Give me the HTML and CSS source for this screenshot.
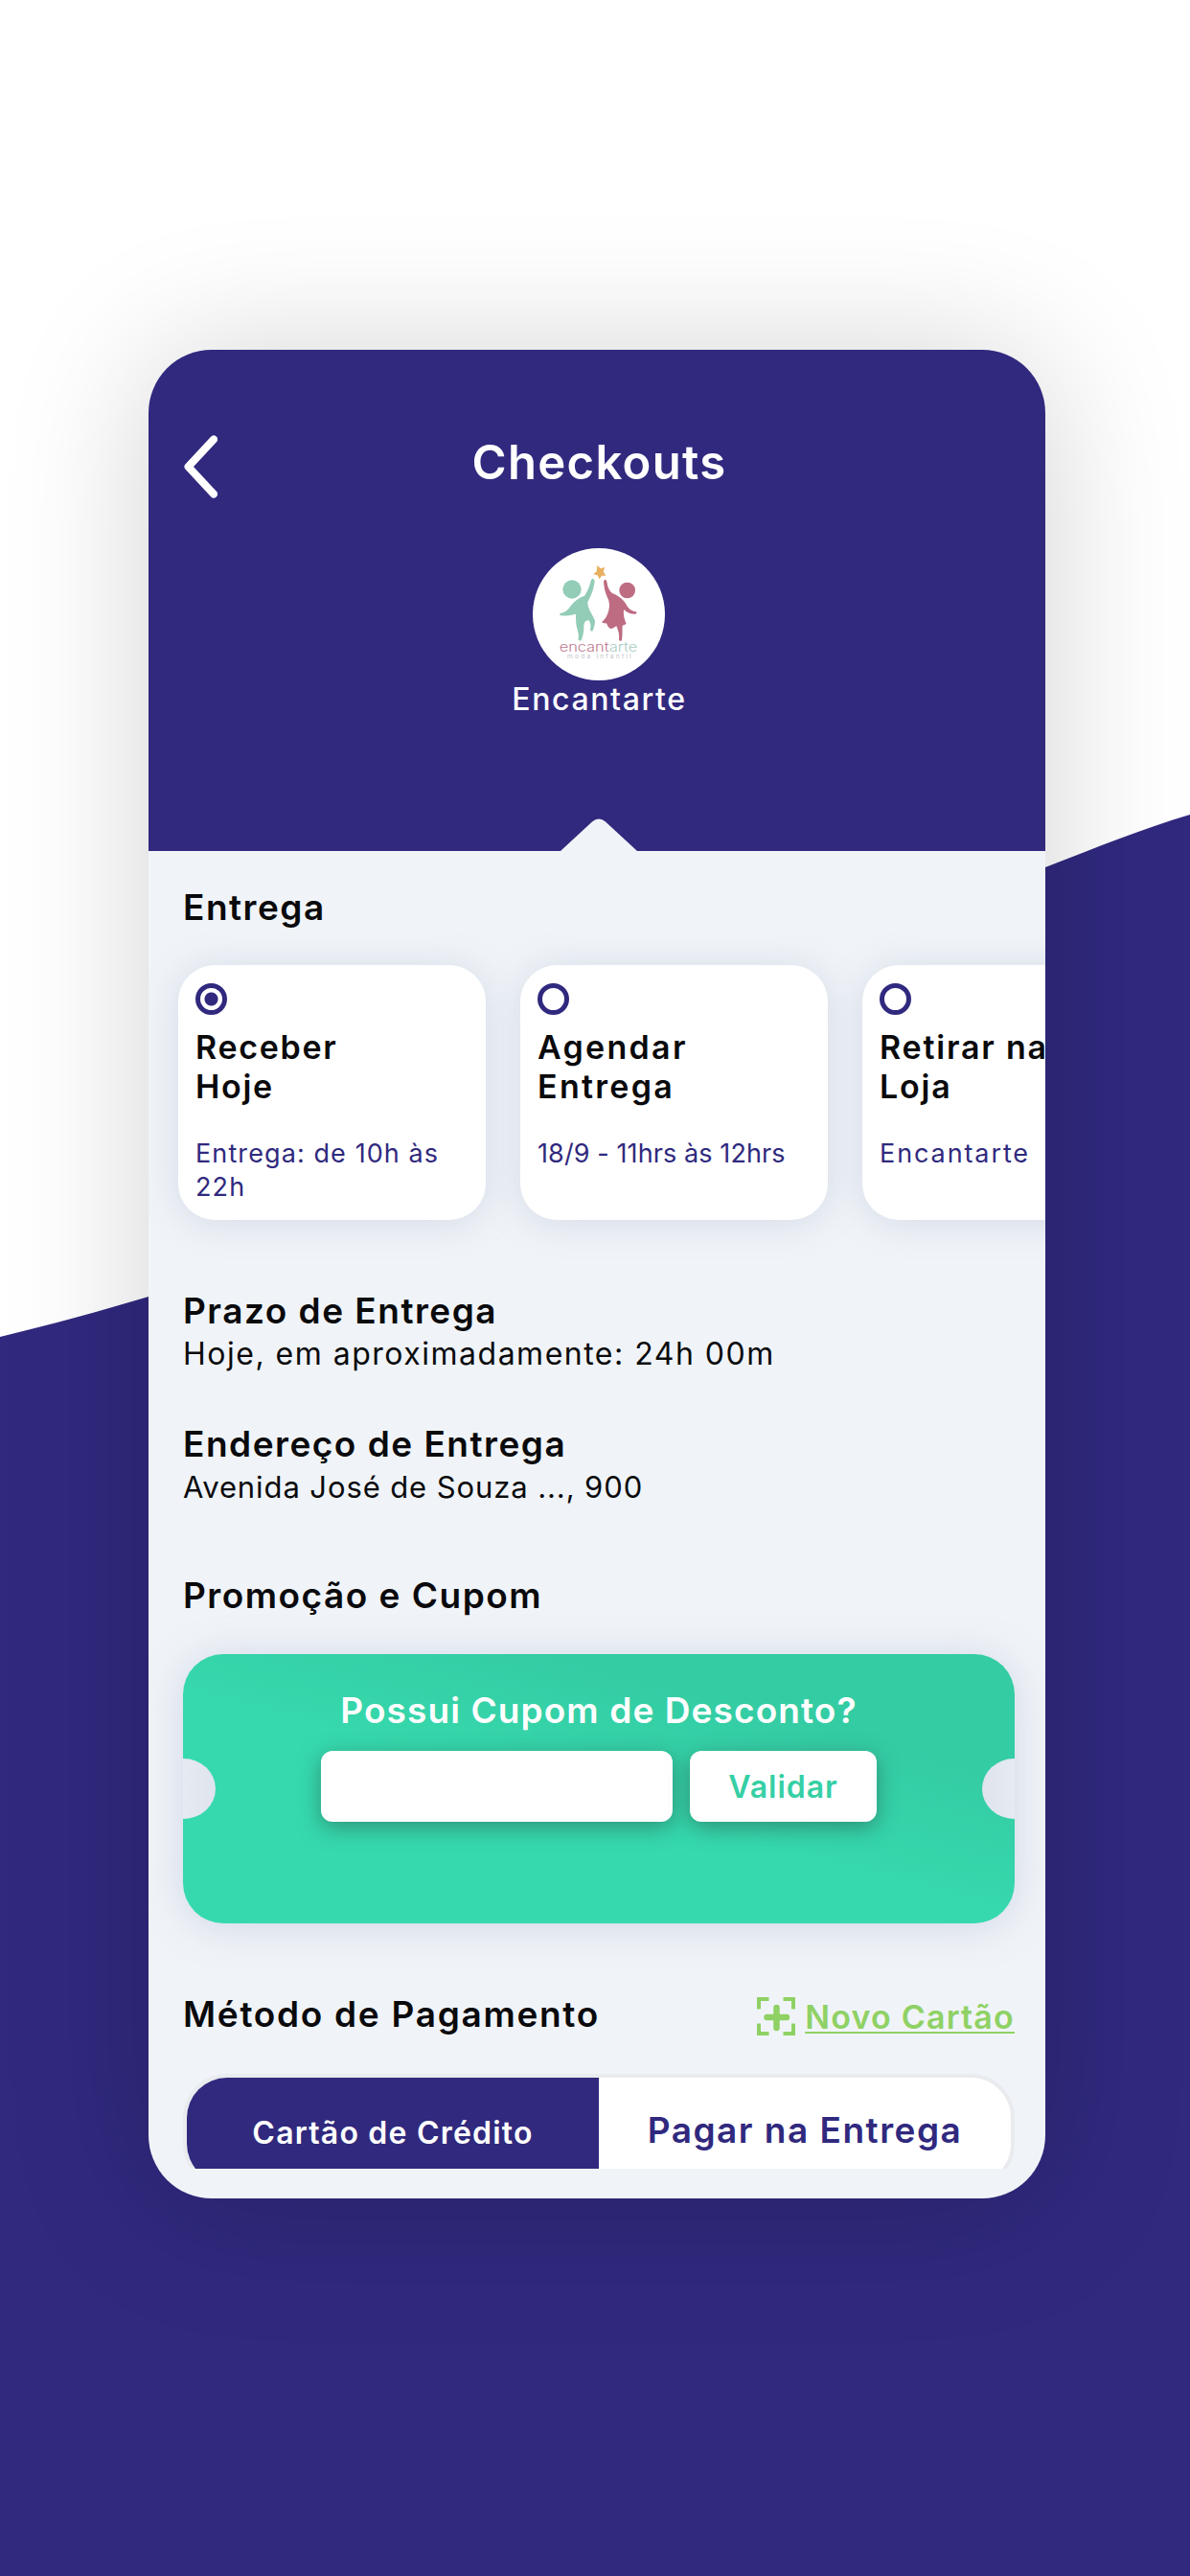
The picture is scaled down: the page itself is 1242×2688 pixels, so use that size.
FILE: index.html
```html
<!DOCTYPE html>
<html lang="pt-BR">
<head>
    <meta charset="UTF-8">
    <meta name="viewport" content="width=device-width, initial-scale=1.0">
    <title>Checkouts</title>
    <link rel="stylesheet" href="styles.css">
</head>
<body>
    <svg class="wave" viewBox="0 0 1242 2688" preserveAspectRatio="none">
        <path d="M0 1395C54 1382 105 1368 155 1353C520 1242 760 1040 1091 905C1145 884 1192 865 1242 850V2688H0Z" fill="#30297e"/>
    </svg>

    <main class="phone">
        <header class="header">
            <div class="topbar">
                <svg class="back" viewBox="0 0 36 66">
                    <path d="M32 4.500L5.500 33L32 61.500" fill="none" stroke="#fff" stroke-width="8" stroke-linecap="round" stroke-linejoin="round"/>
                </svg>
                <h1>Checkouts</h1>
            </div>

            <svg class="logo" viewBox="48 36 414 414">
                <circle cx="255" cy="243" r="207" fill="#fff"/>
                <path d="M250 90L260 99L274 96L269 109L277 122L264 122L257 133L251 121L238 118L248 109Z" fill="#e9b05f"/>
                <g fill="#93cdb7">
                    <circle cx="171" cy="165" r="29"/>
                    <path d="M231 136Q237 126 242 138C240 165 228 190 220 205C220 230 238 245 243 265C243 275 240 285 236 295Q231 298 228 292C230 280 230 270 224 262C212 262 208 270 208 285C208 300 204 315 200 324Q195 328 190 322C193 312 192 305 188 292C183 275 183 262 183 242C170 246 155 248 134 247Q130 243 134 240C150 237 160 228 168 215C180 200 195 190 210 185C220 172 226 155 231 136Z"/>
                </g>
                <g fill="#bd6c82">
                    <circle cx="344" cy="168" r="25"/>
                    <path d="M270 140Q275 128 280 140C282 158 288 170 298 178C315 184 330 195 338 208C345 222 355 234 372 235Q376 239 371 242C355 243 343 238 333 228C331 245 335 260 341 272C336 276 332 277 329 278C328 292 330 300 327 325Q322 329 318 323C320 308 317 295 310 280C303 283 300 290 290 287C283 284 282 276 279 271Q270 272 264 268C275 258 283 245 286 230C290 215 288 200 281 188C274 172 271 158 270 140Z"/>
                </g>
                <text x="131" y="360" class="logo-name" textLength="156" lengthAdjust="spacingAndGlyphs" fill="#bd7a93">encant</text>
                <text x="287" y="360" class="logo-name" textLength="89" lengthAdjust="spacingAndGlyphs" fill="#a9cdc3">arte</text>
                <text x="156" y="380" class="logo-sub" textLength="200" fill="#c3c3cb">moda infantil</text>
            </svg>
            <div class="store">Encantarte</div>
            <svg class="pointer" viewBox="0 0 80 34">
                <path d="M0 34L33 3.500Q40-2.500 47 3.500L80 34Z" fill="#f0f4f8"/>
            </svg>
        </header>

        <section class="content">
            <h2>Entrega</h2>
            <div class="options">
                <div class="option">
                    <span class="radio checked"></span>
                    <h3>Receber<br>Hoje</h3>
                    <p>Entrega: de 10h às<br>22h</p>
                </div>
                <div class="option schedule">
                    <span class="radio"></span>
                    <h3>Agendar<br>Entrega</h3>
                    <p>18/9 - 11hrs às 12hrs</p>
                </div>
                <div class="option pickup">
                    <span class="radio"></span>
                    <h3>Retirar na<br>Loja</h3>
                    <p>Encantarte</p>
                </div>
            </div>

            <div class="info">
                <h2>Prazo de Entrega</h2>
                <p>Hoje, em aproximadamente: 24h 00m</p>
            </div>
            <div class="info address">
                <h2>Endereço de Entrega</h2>
                <p>Avenida José de Souza ..., 900</p>
            </div>

            <h2 class="promo-title">Promoção e Cupom</h2>
            <div class="coupon">
                <h2>Possui Cupom de Desconto?</h2>
                <form class="coupon-form">
                    <input type="text">
                    <button type="button">Validar</button>
                </form>
            </div>

            <div class="payment-head">
                <h2>Método de Pagamento</h2>
                <a class="new-card">
                    <svg viewBox="0 0 40 40" fill="none" stroke="#8fd165">
                        <path d="M2 12.500V2H12.500M27.500 2H38V12.500M38 27.500V38H27.500M12.500 38H2V27.500" stroke-width="4"/>
                        <path d="M20.500 11V32M10.500 21H31" stroke-width="6.500" stroke-linecap="round"/>
                    </svg>
                    <span>Novo Cartão</span>
                </a>
            </div>
            <div class="tabs-clip">
                <div class="tabs">
                    <div class="tab active">Cartão de Crédito</div>
                    <div class="tab">Pagar na Entrega</div>
                </div>
            </div>
        </section>
    </main>
</body>
</html>
```
FILE: styles.css
```css
* {
    box-sizing: border-box;
}
body {
    margin: 0;
    height: 2688px;
    overflow: hidden;
    background: #fff;
    font-family: Inter, "Open Sans", sans-serif;
    color: #0a0a0c;
    display: flow-root;
}
h1, h2, h3, p {
    margin: 0;
    white-space: nowrap;
}
.wave {
    position: absolute;
    top: 0;
    left: 0;
    width: 1242px;
    height: 2688px;
    z-index: -1;
}
.phone {
    width: 936px;
    height: 1929px;
    margin: 365px 0 0 155px;
    border-radius: 66px;
    overflow: hidden;
    background: #f0f4f8;
    box-shadow: 0 6px 150px rgba(0, 0, 0, 0.18);
}

/* header */
.header {
    position: relative;
    height: 523px;
    padding: 88px 35px 0 38px;
    background: #30297e;
    color: #fff;
    display: flex;
    flex-direction: column;
    align-items: center;
}
.topbar {
    width: 100%;
    height: 66px;
    display: grid;
    grid-template-columns: 36px 1fr 36px;
    align-items: center;
}
.back {
    width: 36px;
    height: 66px;
    margin-left: -2px;
}
h1 {
    font-size: 49px;
    line-height: 60px;
    font-weight: 600;
    letter-spacing: 1.3px;
    text-align: center;
    padding: 0 0 8px 2px;
}
.logo {
    width: 138px;
    height: 138px;
    margin-top: 53px;
    flex: none;
}
.logo-name {
    font-size: 42px;
    font-weight: 300;
}
.logo-sub {
    font-size: 20px;
}
.store {
    font-size: 32px;
    line-height: 40px;
    font-weight: 500;
    letter-spacing: 1.6px;
    padding-left: 2px;
}
.pointer {
    position: absolute;
    left: 430px;
    bottom: 0;
    width: 80px;
    height: 34px;
}

/* content */
.content {
    padding: 36px 32px 0 36px;
}
h2 {
    font-size: 37px;
    line-height: 46px;
    font-weight: 600;
    letter-spacing: 1.5px;
}
.options {
    display: flex;
    gap: 36px;
    margin: 37px 0 0 -5px;
}
.option {
    flex: none;
    width: 321px;
    height: 266px;
    padding: 19px 18px;
    border-radius: 38px;
    background: #fff;
    box-shadow: 0 3px 36px rgba(150, 160, 195, 0.3);
}
.radio {
    display: block;
    width: 33px;
    height: 33px;
    border: 5px solid #30297e;
    border-radius: 50%;
}
.radio.checked {
    background: radial-gradient(circle, #30297e 6.500px, transparent 7.500px);
}
h3 {
    margin-top: 13px;
    font-size: 34px;
    line-height: 41px;
    font-weight: 600;
    letter-spacing: 1.7px;
}
.option p {
    margin-top: 32px;
    font-size: 27px;
    line-height: 35px;
    letter-spacing: 1.1px;
    color: #30297e;
}
.schedule h3 {
    letter-spacing: 2.3px;
}
.schedule p {
    letter-spacing: 0.1px;
}
.pickup h3 {
    letter-spacing: 1.8px;
}
.pickup p {
    letter-spacing: 1.9px;
}
.info {
    margin-top: 72px;
}
.info p {
    font-size: 32px;
    line-height: 44px;
    letter-spacing: 1.5px;
}
.info.address {
    margin-top: 49px;
}
.address p {
    font-size: 31px;
    letter-spacing: 0.9px;
}
.promo-title {
    margin-top: 68px;
}

/* coupon */
.coupon {
    position: relative;
    height: 281px;
    margin-top: 38px;
    padding-top: 36px;
    border-radius: 42px;
    background: linear-gradient(15deg, #36d9ad 45%, #34cca3 75%);
    box-shadow: 0 3px 40px rgba(150, 160, 195, 0.35);
    color: #fff;
    text-align: center;
}
.coupon h2 {
    letter-spacing: 1.1px;
}
.coupon::before,
.coupon::after {
    content: "";
    position: absolute;
    top: 109px;
    left: 0;
    width: 34px;
    height: 63px;
    border-radius: 0 34px 34px 0 / 0 32px 32px 0;
    background: linear-gradient(90deg, #e6eaf1, #dfe4ed);
}
.coupon::after {
    left: auto;
    right: 0;
    transform: scaleX(-1);
}
.coupon-form {
    display: flex;
    justify-content: center;
    gap: 18px;
    margin-top: 19px;
}
.coupon-form input,
.coupon-form button {
    width: 367px;
    height: 74px;
    border: 0;
    border-radius: 12px;
    background: #fff;
    box-shadow: 0 6px 22px rgba(35, 80, 70, 0.5);
}
.coupon-form button {
    width: 195px;
    padding: 0;
    font-family: inherit;
    font-size: 32px;
    font-weight: 600;
    letter-spacing: 1px;
    color: #36cfa5;
}

/* payment */
.payment-head {
    display: flex;
    justify-content: space-between;
    margin-top: 72px;
}
.payment-head h2 {
    letter-spacing: 1.7px;
}
.new-card {
    display: flex;
    gap: 10px;
    color: #8fd165;
    font-size: 34px;
    line-height: 46px;
    font-weight: 600;
    letter-spacing: 1.2px;
}
.new-card svg {
    width: 40px;
    height: 40px;
    margin-top: 5px;
}
.new-card span {
    padding-top: 3px;
    text-decoration: underline;
    text-decoration-thickness: 2px;
    text-underline-offset: 3px;
}
.tabs-clip {
    height: 99px;
    margin-top: 36px;
    overflow: hidden;
}
.tabs {
    display: flex;
    height: 119px;
    border: 4px solid #e9ebee;
    border-radius: 46px;
    background: #fff;
    overflow: hidden;
}
.tab {
    flex: 1;
    padding-top: 32px;
    text-align: center;
    white-space: nowrap;
    font-size: 37px;
    line-height: 46px;
    font-weight: 600;
    letter-spacing: 1.5px;
    color: #30297e;
}
.tab.active {
    padding-top: 35px;
    background: #30297e;
    color: #fff;
    font-size: 32px;
    letter-spacing: 1.2px;
}
```
